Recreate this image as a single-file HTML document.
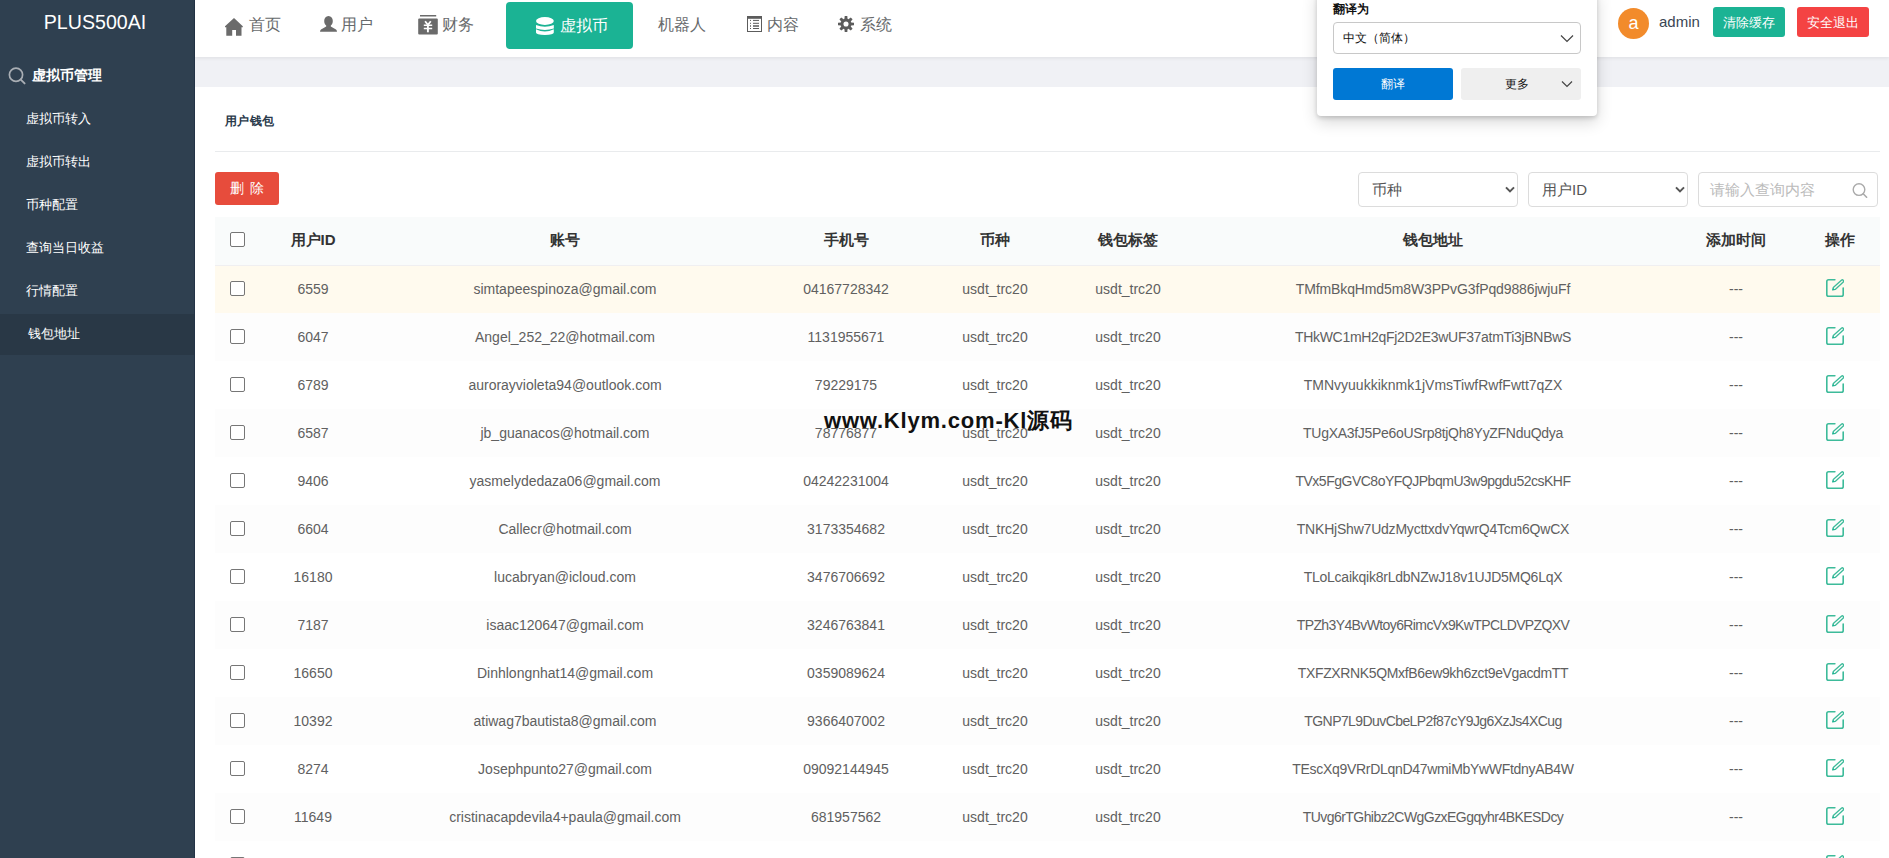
<!DOCTYPE html>
<html><head><meta charset="utf-8">
<style>
*{box-sizing:border-box;margin:0;padding:0}
html,body{width:1889px;height:858px;overflow:hidden;background:#fff;font-family:"Liberation Sans",sans-serif;color:#676a6c}
.abs{position:absolute}
#side{position:absolute;left:0;top:0;width:195px;height:858px;background:#2f4050}
#side .edge{position:absolute;right:0;top:0;width:1px;height:858px;background:#233346}
#logo{position:absolute;left:0;width:190px;top:9px;text-align:center;color:#fff;font-size:19.6px;line-height:26px}
#mhead{position:absolute;left:32px;top:66px;color:#fff;font-size:14px;font-weight:bold;line-height:18px}
.mi{position:absolute;left:26px;color:#fff;font-size:13px;line-height:16px}
#act{position:absolute;left:0;top:314px;width:194px;height:41px;background:#293846}
#hdr{position:absolute;left:195px;top:0;width:1694px;height:57px;background:#fff;box-shadow:0 1px 4px rgba(0,0,0,.08)}
#band{position:absolute;left:195px;top:57px;width:1694px;height:30px;background:#f0f1f5}
.nav{position:absolute;top:15px;font-size:16px;line-height:20px;color:#676a6c;white-space:nowrap}
.nav svg{position:absolute}
#tab{position:absolute;left:506px;top:2px;width:127px;height:47px;background:#1bb394;border-radius:4px}
#title{position:absolute;left:225px;top:112px;font-size:12.4px;letter-spacing:0.4px;font-weight:bold;color:#2a3a4b;line-height:18px}
#hr{position:absolute;left:215px;top:151px;width:1665px;height:1px;background:#e9ebed}
#del{position:absolute;left:215px;top:172px;width:64px;height:33px;background:#e74c3c;border-radius:3px;color:#fff;font-size:14px;line-height:33px;text-align:center;word-spacing:3px}
.sel{position:absolute;top:172px;height:35px;border:1px solid #dcdcdc;border-radius:4px;background:#fff;font-size:15px;color:#555;line-height:33px;padding-left:13px}
table{position:absolute;left:215px;top:217px;width:1665px;border-collapse:collapse;table-layout:fixed}
th,td{height:48px;text-align:center;vertical-align:middle;padding:0;white-space:nowrap;overflow:hidden}
th{font-size:15px;font-weight:bold;color:#333;background:#f9fbfb;border-bottom:1px solid #f0eff1}
td{font-size:14px;color:#606060}
tr.hov td{background:#fffaee}
tr.even td{background:#fdfdfd}
tr.odd td{background:#fff}
.cb{width:15px;height:15px;border:1px solid #767676;border-radius:2px;background:#fff;margin-left:15px;position:relative;top:-1px}
th .cb{top:-1px}
td svg{display:block;margin:0 auto 0 26px;position:relative;top:-1px}
#wm{position:absolute;left:805px;top:409px;width:272px;height:19px;background:#fdfdfd}
#wmt{position:absolute;left:824px;top:406px;letter-spacing:0.8px;font-size:22px;font-weight:bold;color:#111;line-height:30px;white-space:nowrap}
#pop{position:absolute;left:1317px;top:-10px;width:280px;height:126px;background:#fff;border-radius:4px;box-shadow:0 1.5px 4px rgba(0,0,0,.16),0 6px 16px rgba(0,0,0,.16)}
</style></head><body>
<div id="side">
  <div id="logo">PLUS500AI</div>
  <svg class="abs" style="left:8px;top:67px" width="18" height="18" viewBox="0 0 18 18"><circle cx="8" cy="7.8" r="6.6" fill="none" stroke="#a9aeb4" stroke-width="1.7"/><path d="M12.8 12.6L16.6 16.4" stroke="#a9aeb4" stroke-width="1.9" stroke-linecap="round"/></svg>
  <div id="mhead">虚拟币管理</div>
  <div id="act"></div>
  <div class="mi" style="top:111px">虚拟币转入</div>
  <div class="mi" style="top:154px">虚拟币转出</div>
  <div class="mi" style="top:197px">币种配置</div>
  <div class="mi" style="top:240px">查询当日收益</div>
  <div class="mi" style="top:283px">行情配置</div>
  <div class="mi" style="top:326px;left:28px">钱包地址</div>
  <div class="edge"></div>
</div>
<div id="band"></div>
<div id="hdr"></div>
<!-- nav -->
<svg class="abs" style="left:225px;top:18px" width="18" height="18" viewBox="0 0 18 18"><path d="M9 0L0 8.2V9.2H1.3V17.8H7.2V12H11V17.8H16.5V9.2H17.8V8.2Z" fill="#6b6b6b"/></svg>
<div class="nav" style="left:249px">首页</div>
<svg class="abs" style="left:320px;top:16px" width="17" height="16" viewBox="0 0 17 16"><path d="M8.5 0C5.8 0 4.2 2.2 4.2 5C4.2 7 5 8.6 6.2 9.6V10.4L1 13.6Q0 14.3 0 15.8H17Q17 14.3 16 13.6L10.8 10.4V9.6C12 8.6 12.8 7 12.8 5C12.8 2.2 11.2 0 8.5 0Z" fill="#6b6b6b"/></svg>
<div class="nav" style="left:341px">用户</div>
<svg class="abs" style="left:418px;top:15px" width="20" height="20" viewBox="0 0 20 20"><rect x="2" y="0" width="16.2" height="1.5" fill="#6b6b6b"/><rect x="0.2" y="3.4" width="19.6" height="16.2" rx="1" fill="#6b6b6b"/><path d="M7.1 6.3L9.9 9.8L12.8 6.3" stroke="#fff" stroke-width="1.8" fill="none"/><path d="M5.8 10.3H14.2M5.8 13.5H14.2" stroke="#fff" stroke-width="1.5"/><path d="M9.9 9.6V17.3" stroke="#fff" stroke-width="1.9"/></svg>
<div class="nav" style="left:442px">财务</div>
<div id="tab"></div>
<svg class="abs" style="left:536px;top:17px" width="18" height="18" viewBox="0 0 18 18"><ellipse cx="8.9" cy="4" rx="8.9" ry="3.9" fill="#fff"/><path d="M0 8.1Q8.9 11.5 17.8 8.1V11.6Q8.9 14.4 0 11.6Z" fill="#fff"/><path d="M0 12.2Q8.9 16.6 17.8 12.2V15.6Q17.8 18 8.9 18Q0 18 0 15.6Z" fill="#fff"/></svg>
<div class="nav" style="left:560px;color:#fff;top:16px">虚拟币</div>
<div class="nav" style="left:658px">机器人</div>
<svg class="abs" style="left:747px;top:16px" width="15" height="16" viewBox="0 0 15 16"><rect x="0.5" y="0.5" width="14" height="15" fill="none" stroke="#5c5c5c" stroke-width="1"/><rect x="0" y="0" width="15" height="2.8" fill="#5c5c5c"/><path d="M3 4.4H4M6 4.4H12M3 7.3H4M6 7.3H12M3 12.5H4M6 12.5H12" stroke="#5c5c5c" stroke-width="1"/><path d="M3 10H4M6 10H12" stroke="#5c5c5c" stroke-width="1.6"/></svg>
<div class="nav" style="left:767px">内容</div>
<svg class="abs" style="left:838px;top:16px" width="16" height="16" viewBox="-8 -8 16 16"><g fill="#5c5c5c"><path d="M-1.3 -8H1.3L1.6 -4.6H-1.6Z" transform="rotate(0)"/><path d="M-1.3 -8H1.3L1.6 -4.6H-1.6Z" transform="rotate(45)"/><path d="M-1.3 -8H1.3L1.6 -4.6H-1.6Z" transform="rotate(90)"/><path d="M-1.3 -8H1.3L1.6 -4.6H-1.6Z" transform="rotate(135)"/><path d="M-1.3 -8H1.3L1.6 -4.6H-1.6Z" transform="rotate(180)"/><path d="M-1.3 -8H1.3L1.6 -4.6H-1.6Z" transform="rotate(225)"/><path d="M-1.3 -8H1.3L1.6 -4.6H-1.6Z" transform="rotate(270)"/><path d="M-1.3 -8H1.3L1.6 -4.6H-1.6Z" transform="rotate(315)"/></g><circle r="4" fill="none" stroke="#5c5c5c" stroke-width="2.9"/></svg>
<div class="nav" style="left:860px">系统</div>
<!-- right header -->
<div class="abs" style="left:1618px;top:8px;width:31px;height:31px;border-radius:50%;background:#f28b2b;color:#fff;font-size:18px;line-height:30px;text-align:center">a</div>
<div class="abs" style="left:1659px;top:13px;font-size:15px;line-height:18px;color:#3a4654">admin</div>
<div class="abs" style="left:1713px;top:7px;width:72px;height:30px;background:#1bb394;border-radius:3px;color:#fff;font-size:13px;line-height:31px;text-align:center">清除缓存</div>
<div class="abs" style="left:1797px;top:7px;width:72px;height:30px;background:#f44343;border-radius:3px;color:#fff;font-size:13px;line-height:31px;text-align:center">安全退出</div>
<!-- content -->
<div id="title">用户钱包</div>
<div id="hr"></div>
<div id="del">删 除</div>
<div class="sel" style="left:1358px;width:160px">币种<svg class="abs" style="left:146px;top:13px" width="11" height="8" viewBox="0 0 11 8"><path d="M1 1.4L5 5.4L9 1.4" stroke="#555" stroke-width="2" fill="none"/></svg></div>
<div class="sel" style="left:1528px;width:160px">用户ID<svg class="abs" style="left:146px;top:13px" width="11" height="8" viewBox="0 0 11 8"><path d="M1 1.4L5 5.4L9 1.4" stroke="#555" stroke-width="2" fill="none"/></svg></div>
<div class="sel" style="left:1698px;width:180px;color:#bbb;padding-left:11px">请输入查询内容<svg class="abs" style="left:153px;top:10px" width="16" height="15" viewBox="0 0 16 15"><circle cx="7" cy="6.6" r="5.8" fill="none" stroke="#aaa" stroke-width="1.4"/><path d="M11.2 10.8L14.6 14.2" stroke="#aaa" stroke-width="1.6" stroke-linecap="round"/></svg></div>
<table>
<colgroup><col style="width:45px"><col style="width:106px"><col style="width:398px"><col style="width:164px"><col style="width:134px"><col style="width:132px"><col style="width:478px"><col style="width:128px"><col style="width:80px"></colgroup>
<tr><th><div class="cb"></div></th><th>用户ID</th><th>账号</th><th>手机号</th><th>币种</th><th>钱包标签</th><th>钱包地址</th><th>添加时间</th><th>操作</th></tr>
<tr class="hov"><td><div class="cb"></div></td><td>6559</td><td>simtapeespinoza@gmail.com</td><td>04167728342</td><td>usdt_trc20</td><td>usdt_trc20</td><td style="letter-spacing:-0.12px">TMfmBkqHmd5m8W3PPvG3fPqd9886jwjuFf</td><td>---</td><td><svg width="18" height="18" viewBox="0 0 18 18"><path d="M8.9 0.8H2.6Q0.8 0.8 0.8 2.6V15.4Q0.8 17.2 2.6 17.2H15.4Q17.2 17.2 17.2 15.4V9" fill="none" stroke="#3dbb9a" stroke-width="1.6" stroke-linecap="round"/><path d="M6.7 10.9L7.3 8.5L15.4 1.2Q16.4 0.4 17.2 1.2Q18 2.1 17.3 3.1L9.2 10.4Z" fill="none" stroke="#3dbb9a" stroke-width="1.3" stroke-linejoin="round"/><path d="M6.5 11.2L7 8.9L8.9 10.6Z" fill="#1ab394"/></svg></td></tr>
<tr class="even"><td><div class="cb"></div></td><td>6047</td><td>Angel_252_22@hotmail.com</td><td>1131955671</td><td>usdt_trc20</td><td>usdt_trc20</td><td style="letter-spacing:-0.31px">THkWC1mH2qFj2D2E3wUF37atmTi3jBNBwS</td><td>---</td><td><svg width="18" height="18" viewBox="0 0 18 18"><path d="M8.9 0.8H2.6Q0.8 0.8 0.8 2.6V15.4Q0.8 17.2 2.6 17.2H15.4Q17.2 17.2 17.2 15.4V9" fill="none" stroke="#3dbb9a" stroke-width="1.6" stroke-linecap="round"/><path d="M6.7 10.9L7.3 8.5L15.4 1.2Q16.4 0.4 17.2 1.2Q18 2.1 17.3 3.1L9.2 10.4Z" fill="none" stroke="#3dbb9a" stroke-width="1.3" stroke-linejoin="round"/><path d="M6.5 11.2L7 8.9L8.9 10.6Z" fill="#1ab394"/></svg></td></tr>
<tr class="odd"><td><div class="cb"></div></td><td>6789</td><td>aurorayvioleta94@outlook.com</td><td>79229175</td><td>usdt_trc20</td><td>usdt_trc20</td><td style="letter-spacing:0px">TMNvyuukkiknmk1jVmsTiwfRwfFwtt7qZX</td><td>---</td><td><svg width="18" height="18" viewBox="0 0 18 18"><path d="M8.9 0.8H2.6Q0.8 0.8 0.8 2.6V15.4Q0.8 17.2 2.6 17.2H15.4Q17.2 17.2 17.2 15.4V9" fill="none" stroke="#3dbb9a" stroke-width="1.6" stroke-linecap="round"/><path d="M6.7 10.9L7.3 8.5L15.4 1.2Q16.4 0.4 17.2 1.2Q18 2.1 17.3 3.1L9.2 10.4Z" fill="none" stroke="#3dbb9a" stroke-width="1.3" stroke-linejoin="round"/><path d="M6.5 11.2L7 8.9L8.9 10.6Z" fill="#1ab394"/></svg></td></tr>
<tr class="even"><td><div class="cb"></div></td><td>6587</td><td>jb_guanacos@hotmail.com</td><td>78776877</td><td>usdt_trc20</td><td>usdt_trc20</td><td style="letter-spacing:-0.3px">TUgXA3fJ5Pe6oUSrp8tjQh8YyZFNduQdya</td><td>---</td><td><svg width="18" height="18" viewBox="0 0 18 18"><path d="M8.9 0.8H2.6Q0.8 0.8 0.8 2.6V15.4Q0.8 17.2 2.6 17.2H15.4Q17.2 17.2 17.2 15.4V9" fill="none" stroke="#3dbb9a" stroke-width="1.6" stroke-linecap="round"/><path d="M6.7 10.9L7.3 8.5L15.4 1.2Q16.4 0.4 17.2 1.2Q18 2.1 17.3 3.1L9.2 10.4Z" fill="none" stroke="#3dbb9a" stroke-width="1.3" stroke-linejoin="round"/><path d="M6.5 11.2L7 8.9L8.9 10.6Z" fill="#1ab394"/></svg></td></tr>
<tr class="odd"><td><div class="cb"></div></td><td>9406</td><td>yasmelydedaza06@gmail.com</td><td>04242231004</td><td>usdt_trc20</td><td>usdt_trc20</td><td style="letter-spacing:-0.49px">TVx5FgGVC8oYFQJPbqmU3w9pgdu52csKHF</td><td>---</td><td><svg width="18" height="18" viewBox="0 0 18 18"><path d="M8.9 0.8H2.6Q0.8 0.8 0.8 2.6V15.4Q0.8 17.2 2.6 17.2H15.4Q17.2 17.2 17.2 15.4V9" fill="none" stroke="#3dbb9a" stroke-width="1.6" stroke-linecap="round"/><path d="M6.7 10.9L7.3 8.5L15.4 1.2Q16.4 0.4 17.2 1.2Q18 2.1 17.3 3.1L9.2 10.4Z" fill="none" stroke="#3dbb9a" stroke-width="1.3" stroke-linejoin="round"/><path d="M6.5 11.2L7 8.9L8.9 10.6Z" fill="#1ab394"/></svg></td></tr>
<tr class="even"><td><div class="cb"></div></td><td>6604</td><td>Callecr@hotmail.com</td><td>3173354682</td><td>usdt_trc20</td><td>usdt_trc20</td><td style="letter-spacing:-0.21px">TNKHjShw7UdzMycttxdvYqwrQ4Tcm6QwCX</td><td>---</td><td><svg width="18" height="18" viewBox="0 0 18 18"><path d="M8.9 0.8H2.6Q0.8 0.8 0.8 2.6V15.4Q0.8 17.2 2.6 17.2H15.4Q17.2 17.2 17.2 15.4V9" fill="none" stroke="#3dbb9a" stroke-width="1.6" stroke-linecap="round"/><path d="M6.7 10.9L7.3 8.5L15.4 1.2Q16.4 0.4 17.2 1.2Q18 2.1 17.3 3.1L9.2 10.4Z" fill="none" stroke="#3dbb9a" stroke-width="1.3" stroke-linejoin="round"/><path d="M6.5 11.2L7 8.9L8.9 10.6Z" fill="#1ab394"/></svg></td></tr>
<tr class="odd"><td><div class="cb"></div></td><td>16180</td><td>lucabryan@icloud.com</td><td>3476706692</td><td>usdt_trc20</td><td>usdt_trc20</td><td style="letter-spacing:-0.24px">TLoLcaikqik8rLdbNZwJ18v1UJD5MQ6LqX</td><td>---</td><td><svg width="18" height="18" viewBox="0 0 18 18"><path d="M8.9 0.8H2.6Q0.8 0.8 0.8 2.6V15.4Q0.8 17.2 2.6 17.2H15.4Q17.2 17.2 17.2 15.4V9" fill="none" stroke="#3dbb9a" stroke-width="1.6" stroke-linecap="round"/><path d="M6.7 10.9L7.3 8.5L15.4 1.2Q16.4 0.4 17.2 1.2Q18 2.1 17.3 3.1L9.2 10.4Z" fill="none" stroke="#3dbb9a" stroke-width="1.3" stroke-linejoin="round"/><path d="M6.5 11.2L7 8.9L8.9 10.6Z" fill="#1ab394"/></svg></td></tr>
<tr class="even"><td><div class="cb"></div></td><td>7187</td><td>isaac120647@gmail.com</td><td>3246763841</td><td>usdt_trc20</td><td>usdt_trc20</td><td style="letter-spacing:-0.61px">TPZh3Y4BvWtoy6RimcVx9KwTPCLDVPZQXV</td><td>---</td><td><svg width="18" height="18" viewBox="0 0 18 18"><path d="M8.9 0.8H2.6Q0.8 0.8 0.8 2.6V15.4Q0.8 17.2 2.6 17.2H15.4Q17.2 17.2 17.2 15.4V9" fill="none" stroke="#3dbb9a" stroke-width="1.6" stroke-linecap="round"/><path d="M6.7 10.9L7.3 8.5L15.4 1.2Q16.4 0.4 17.2 1.2Q18 2.1 17.3 3.1L9.2 10.4Z" fill="none" stroke="#3dbb9a" stroke-width="1.3" stroke-linejoin="round"/><path d="M6.5 11.2L7 8.9L8.9 10.6Z" fill="#1ab394"/></svg></td></tr>
<tr class="odd"><td><div class="cb"></div></td><td>16650</td><td>Dinhlongnhat14@gmail.com</td><td>0359089624</td><td>usdt_trc20</td><td>usdt_trc20</td><td style="letter-spacing:-0.35px">TXFZXRNK5QMxfB6ew9kh6zct9eVgacdmTT</td><td>---</td><td><svg width="18" height="18" viewBox="0 0 18 18"><path d="M8.9 0.8H2.6Q0.8 0.8 0.8 2.6V15.4Q0.8 17.2 2.6 17.2H15.4Q17.2 17.2 17.2 15.4V9" fill="none" stroke="#3dbb9a" stroke-width="1.6" stroke-linecap="round"/><path d="M6.7 10.9L7.3 8.5L15.4 1.2Q16.4 0.4 17.2 1.2Q18 2.1 17.3 3.1L9.2 10.4Z" fill="none" stroke="#3dbb9a" stroke-width="1.3" stroke-linejoin="round"/><path d="M6.5 11.2L7 8.9L8.9 10.6Z" fill="#1ab394"/></svg></td></tr>
<tr class="even"><td><div class="cb"></div></td><td>10392</td><td>atiwag7bautista8@gmail.com</td><td>9366407002</td><td>usdt_trc20</td><td>usdt_trc20</td><td style="letter-spacing:-0.58px">TGNP7L9DuvCbeLP2f87cY9Jg6XzJs4XCug</td><td>---</td><td><svg width="18" height="18" viewBox="0 0 18 18"><path d="M8.9 0.8H2.6Q0.8 0.8 0.8 2.6V15.4Q0.8 17.2 2.6 17.2H15.4Q17.2 17.2 17.2 15.4V9" fill="none" stroke="#3dbb9a" stroke-width="1.6" stroke-linecap="round"/><path d="M6.7 10.9L7.3 8.5L15.4 1.2Q16.4 0.4 17.2 1.2Q18 2.1 17.3 3.1L9.2 10.4Z" fill="none" stroke="#3dbb9a" stroke-width="1.3" stroke-linejoin="round"/><path d="M6.5 11.2L7 8.9L8.9 10.6Z" fill="#1ab394"/></svg></td></tr>
<tr class="odd"><td><div class="cb"></div></td><td>8274</td><td>Josephpunto27@gmail.com</td><td>09092144945</td><td>usdt_trc20</td><td>usdt_trc20</td><td style="letter-spacing:-0.3px">TEscXq9VRrDLqnD47wmiMbYwWFtdnyAB4W</td><td>---</td><td><svg width="18" height="18" viewBox="0 0 18 18"><path d="M8.9 0.8H2.6Q0.8 0.8 0.8 2.6V15.4Q0.8 17.2 2.6 17.2H15.4Q17.2 17.2 17.2 15.4V9" fill="none" stroke="#3dbb9a" stroke-width="1.6" stroke-linecap="round"/><path d="M6.7 10.9L7.3 8.5L15.4 1.2Q16.4 0.4 17.2 1.2Q18 2.1 17.3 3.1L9.2 10.4Z" fill="none" stroke="#3dbb9a" stroke-width="1.3" stroke-linejoin="round"/><path d="M6.5 11.2L7 8.9L8.9 10.6Z" fill="#1ab394"/></svg></td></tr>
<tr class="even"><td><div class="cb"></div></td><td>11649</td><td>cristinacapdevila4+paula@gmail.com</td><td>681957562</td><td>usdt_trc20</td><td>usdt_trc20</td><td style="letter-spacing:-0.55px">TUvg6rTGhibz2CWgGzxEGgqyhr4BKESDcy</td><td>---</td><td><svg width="18" height="18" viewBox="0 0 18 18"><path d="M8.9 0.8H2.6Q0.8 0.8 0.8 2.6V15.4Q0.8 17.2 2.6 17.2H15.4Q17.2 17.2 17.2 15.4V9" fill="none" stroke="#3dbb9a" stroke-width="1.6" stroke-linecap="round"/><path d="M6.7 10.9L7.3 8.5L15.4 1.2Q16.4 0.4 17.2 1.2Q18 2.1 17.3 3.1L9.2 10.4Z" fill="none" stroke="#3dbb9a" stroke-width="1.3" stroke-linejoin="round"/><path d="M6.5 11.2L7 8.9L8.9 10.6Z" fill="#1ab394"/></svg></td></tr>
<tr class="odd"><td><div class="cb"></div></td><td></td><td></td><td></td><td></td><td></td><td></td><td></td><td><svg width="18" height="18" viewBox="0 0 18 18"><path d="M8.9 0.8H2.6Q0.8 0.8 0.8 2.6V15.4Q0.8 17.2 2.6 17.2H15.4Q17.2 17.2 17.2 15.4V9" fill="none" stroke="#3dbb9a" stroke-width="1.6" stroke-linecap="round"/><path d="M6.7 10.9L7.3 8.5L15.4 1.2Q16.4 0.4 17.2 1.2Q18 2.1 17.3 3.1L9.2 10.4Z" fill="none" stroke="#3dbb9a" stroke-width="1.3" stroke-linejoin="round"/><path d="M6.5 11.2L7 8.9L8.9 10.6Z" fill="#1ab394"/></svg></td></tr>
</table>
<div id="wm"></div>
<div id="wmt">www.Klym.com-Kl源码</div>
<!-- translate popup -->
<div id="pop">
  <div class="abs" style="left:16px;top:11px;font-size:11.6px;font-weight:bold;color:#111;line-height:16px">翻译为</div>
  <div class="abs" style="left:16px;top:32px;width:248px;height:32px;border:1px solid #c8c8c8;border-radius:4px;font-size:12px;color:#111;line-height:30px;padding-left:9px">中文（简体）<svg class="abs" style="left:226px;top:11px" width="14" height="9" viewBox="0 0 14 9"><path d="M1 1.5L7 7.5L13 1.5" stroke="#444" stroke-width="1.2" fill="none"/></svg></div>
  <div class="abs" style="left:16px;top:78px;width:120px;height:32px;background:#0078d4;border-radius:3px;color:#fff;font-size:12px;line-height:32px;text-align:center">翻译</div>
  <div class="abs" style="left:144px;top:78px;width:120px;height:32px;background:#efefef;border-radius:3px;color:#111;font-size:12px;line-height:32px;padding-left:44px">更多<svg class="abs" style="left:100px;top:12px" width="12" height="8" viewBox="0 0 12 8"><path d="M1 1.5L6 6.5L11 1.5" stroke="#444" stroke-width="1.2" fill="none"/></svg></div>
</div>
</body></html>
